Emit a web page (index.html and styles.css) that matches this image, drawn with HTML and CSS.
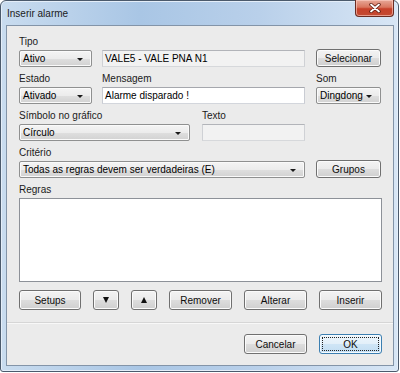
FILE: index.html
```html
<!DOCTYPE html>
<html>
<head>
	<meta charset="utf-8">
	<title>Inserir alarme</title>
	<link rel="stylesheet" href="styles.css">
</head>
<body>

	<div class="window">
		<div class="titlebar">
			<span class="title">Inserir alarme</span>
			<span class="close">
				<svg width="12" height="10" viewBox="0 0 12 10">
					<path d="M2 1.5 L10 8.5 M10 1.5 L2 8.5" stroke="#5a1a10" stroke-width="3.4" stroke-linecap="round"/>
					<path d="M2 1.5 L10 8.5 M10 1.5 L2 8.5" stroke="#ffffff" stroke-width="1.8" stroke-linecap="round"/>
				</svg>
			</span>
		</div>

		<div class="client">
			<div class="form">

				<div class="row">
					<div class="field w-small">
						<label>Tipo</label>
						<div class="combo"><span>Ativo</span><i class="arrow"></i></div>
					</div>
					<div class="field w-wide">
						<div class="textbox readonly">VALE5 - VALE PNA N1</div>
					</div>
					<div class="field w-btn">
						<div class="btn">Selecionar</div>
					</div>
				</div>

				<div class="row">
					<div class="field w-small">
						<label>Estado</label>
						<div class="combo"><span>Ativado</span><i class="arrow"></i></div>
					</div>
					<div class="field w-wide">
						<label>Mensagem</label>
						<div class="textbox">Alarme disparado !</div>
					</div>
					<div class="field w-btn">
						<label>Som</label>
						<div class="combo"><span>Dingdong</span><i class="arrow"></i></div>
					</div>
				</div>

				<div class="row">
					<div class="field w-symbol">
						<label>Símbolo no gráfico</label>
						<div class="combo"><span>Círculo</span><i class="arrow"></i></div>
					</div>
					<div class="field w-text">
						<label>Texto</label>
						<div class="textbox readonly"></div>
					</div>
				</div>

				<div class="row">
					<div class="field w-criteria">
						<label>Critério</label>
						<div class="combo"><span>Todas as regras devem ser verdadeiras (E)</span><i class="arrow"></i></div>
					</div>
					<div class="field w-btn">
						<div class="btn">Grupos</div>
					</div>
				</div>

				<div class="field">
					<label>Regras</label>
					<div class="listbox"></div>
				</div>

				<div class="actions">
					<div class="btn b-setups">Setups</div>
					<div class="btn b-arrow"><i class="tri-down"></i></div>
					<div class="btn b-arrow"><i class="tri-up"></i></div>
					<div class="btn b-wide">Remover</div>
					<div class="btn b-wide">Alterar</div>
					<div class="btn b-wide">Inserir</div>
				</div>
			</div>

			<div class="footer">
				<div class="btn b-wide">Cancelar</div>
				<div class="btn b-wide default"><span class="focus">OK</span></div>
			</div>
		</div>
	</div>

</body>
</html>
```

FILE: styles.css
```css
*{
    margin: 0;
    padding: 0;
    box-sizing: border-box;
}
body{
    background: #ffffff;
    font-family: "Liberation Sans", Arial, sans-serif;
    font-size: 10px;
    color: #000000;
}
.window{
    width: 399px;
    height: 372px;
    border: 1px solid #4b5a6c;
    border-radius: 6px 6px 3px 3px;
    background: linear-gradient(90deg, #c9dcef 0%, #a9c6e5 35%, #b9d0ea 65%, #d8e6f5 100%);
    display: flex;
    flex-direction: column;
    box-shadow: inset 0 0 0 1px #e4eef9;
}
.titlebar{
    height: 24px;
    display: flex;
    justify-content: space-between;
    align-items: flex-start;
    padding-left: 6px;
}
.title{
    line-height: 24px;
    color: #1b1b1b;
    padding-top: 1px;
}
.close{
    width: 39px;
    height: 17px;
    margin-top: -1px;
    margin-right: 4px;
    border: 1px solid #6a2c22;
    border-top: none;
    border-radius: 0 0 4px 4px;
    background: linear-gradient(#e7a898 0%, #d9765f 45%, #c7412a 55%, #c24a32 100%);
    box-shadow: inset 0 0 0 1px rgba(255, 210, 200, 0.6);
    display: flex;
    justify-content: center;
    align-items: center;
}
.client{
    flex: 1;
    margin: 0 4px 5px 5px;
    border: 1px solid #8394a8;
    background: #ebebeb;
    display: flex;
    flex-direction: column;
}
.form{
    padding: 10px 11px 0 12px;
    display: flex;
    flex-direction: column;
    gap: 6px;
}
.row{
    display: flex;
    align-items: flex-end;
    gap: 10px;
}
.field label{
    display: block;
    height: 12px;
    line-height: 12px;
    margin-bottom: 2px;
    color: #1a1a1a;
}
.w-small{ width: 73px; }
.w-wide{ width: 203px; margin-right: 1px; }
.w-btn{ width: 65px; }
.w-symbol{ width: 171px; margin-right: 2px; }
.w-text{ width: 103px; }
.w-criteria{ width: 286px; margin-right: 1px; }

.combo{
    height: 17px;
    border: 1px solid #8f9090;
    border-radius: 2px;
    background: linear-gradient(#f4f4f4 0%, #ececec 50%, #dfdfdf 51%, #d2d2d2 100%);
    box-shadow: inset 0 0 0 1px #fafafa;
    display: flex;
    align-items: center;
    justify-content: space-between;
    padding: 0 8px 0 3px;
    line-height: 15px;
}
.arrow{
    width: 0;
    height: 0;
    border-left: 3px solid transparent;
    border-right: 3px solid transparent;
    border-top: 3px solid #1a1a1a;
    margin-top: 2px;
}
.textbox{
    height: 17px;
    border: 1px solid #abadb3;
    border-color: #a5a7ad #c9ccd3 #d3d6dc #c9ccd3;
    background: #ffffff;
    line-height: 15px;
    padding-left: 2px;
}
.textbox.readonly{
    background: #f2f2f2;
    border-color: #b2b4b9 #cfd1d5 #d6d8db #cfd1d5;
}
.listbox{
    height: 84px;
    border: 1px solid #8d9198;
    background: #ffffff;
}

.btn{
    height: 18px;
    border: 1px solid #707070;
    border-radius: 3px;
    background: linear-gradient(#f3f3f3 0%, #ebebeb 50%, #dddddd 51%, #cfcfcf 100%);
    box-shadow: inset 0 0 0 1px #fbfbfb;
    display: flex;
    justify-content: center;
    align-items: center;
    color: #0d0d0d;
}
.actions{
    display: flex;
    gap: 12px;
    margin-top: 2px;
}
.actions .btn, .footer .btn{
    height: 20px;
}
.b-setups{ width: 62px; }
.b-arrow{ width: 26px; }
.b-wide{ width: 63px; }
.tri-down, .tri-up{
    width: 0;
    height: 0;
    border-left: 3.5px solid transparent;
    border-right: 3.5px solid transparent;
}
.tri-down{ border-top: 6px solid #111111; }
.tri-up{ border-bottom: 6px solid #111111; }

.footer{
    margin-top: 12px;
    border-top: 1px solid #d6d6d6;
    box-shadow: inset 0 1px 0 #f8f8f8;
    padding: 11px 11px 0 0;
    display: flex;
    justify-content: flex-end;
    gap: 12px;
    flex: 1;
    align-items: flex-start;
}
.btn.default{
    border-color: #3c7fb1;
    background: linear-gradient(#eef6fc 0%, #e2eff9 50%, #cfe5f6 51%, #c2ddf2 100%);
    box-shadow: inset 0 0 0 1px #f4fafe;
    padding: 2px;
}
.focus{
    width: 100%;
    height: 100%;
    border: 1px dotted #222222;
    display: flex;
    justify-content: center;
    align-items: center;
}
```
